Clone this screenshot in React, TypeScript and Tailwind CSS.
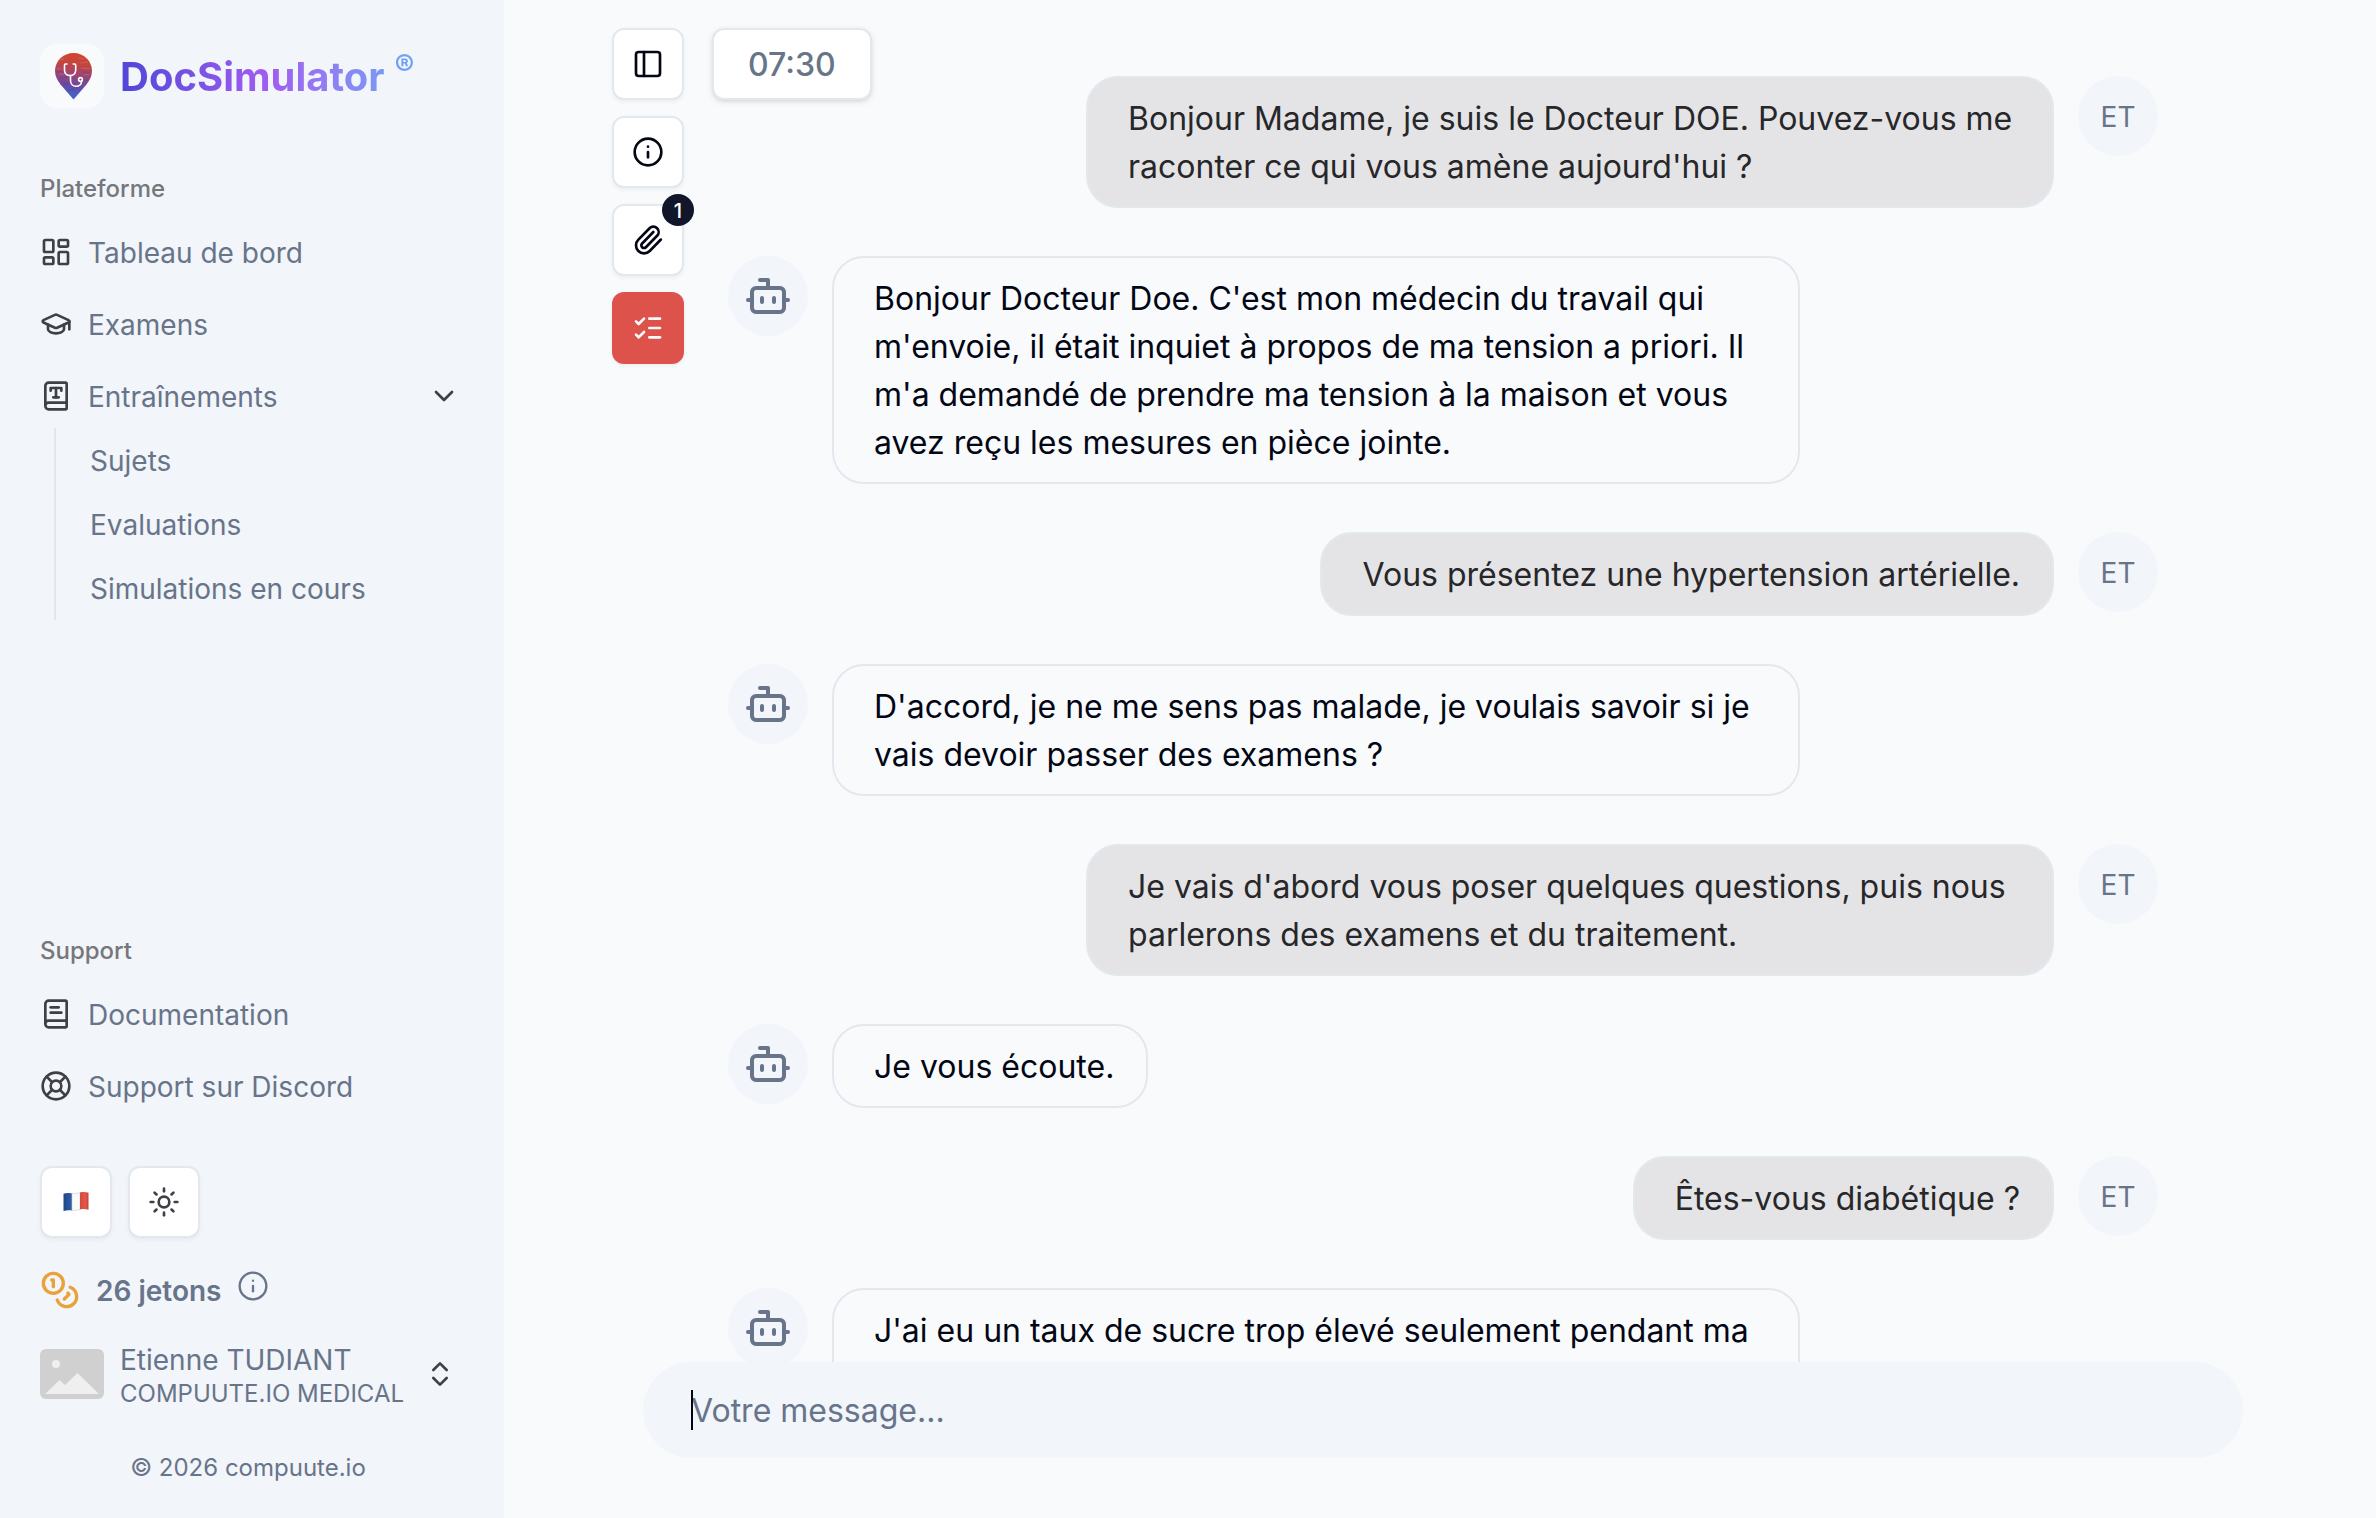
import {
  BookText,
  BookType,
  Bot,
  ChevronDown,
  ChevronsUpDown,
  GraduationCap,
  Info,
  LayoutDashboard,
  LifeBuoy,
  ListChecks,
  PanelLeft,
  Paperclip,
  Sun,
  type LucideIcon,
} from "lucide-react";
import { useState } from "react";

interface Message {
  from: "user" | "bot";
  text: string;
  // Reply still being written, the bubble keeps its full size
  pending?: boolean;
}

const MESSAGES: Message[] = [
  {
    from: "user",
    text: "Bonjour Madame, je suis le Docteur DOE. Pouvez-vous me raconter ce qui vous amène aujourd'hui ?",
  },
  {
    from: "bot",
    text: "Bonjour Docteur Doe. C'est mon médecin du travail qui m'envoie, il était inquiet à propos de ma tension a priori. Il m'a demandé de prendre ma tension à la maison et vous avez reçu les mesures en pièce jointe.",
  },
  { from: "user", text: "Vous présentez une hypertension artérielle." },
  {
    from: "bot",
    text: "D'accord, je ne me sens pas malade, je voulais savoir si je vais devoir passer des examens ?",
  },
  {
    from: "user",
    text: "Je vais d'abord vous poser quelques questions, puis nous parlerons des examens et du traitement.",
  },
  { from: "bot", text: "Je vous écoute." },
  { from: "user", text: "Êtes-vous diabétique ?" },
  { from: "bot", text: "J'ai eu un taux de sucre trop élevé seulement pendant ma", pending: true },
];

const SUB_ITEMS = ["Sujets", "Evaluations", "Simulations en cours"];

const Logo = () => (
  <svg viewBox="0 0 64 64" className="size-16" aria-hidden="true">
    <defs>
      <linearGradient id="pin" x1="0.55" y1="0" x2="0.45" y2="1">
        <stop offset="0" stopColor="#d5432f" />
        <stop offset="0.25" stopColor="#c2453f" />
        <stop offset="0.45" stopColor="#a2456e" />
        <stop offset="0.7" stopColor="#6a48a4" />
        <stop offset="1" stopColor="#2f72cf" />
      </linearGradient>
      <clipPath id="pin-shape">
        <path d="M33.5 9C23.3 9 15 16.8 15 27c0 5.200 2.300 9.200 5.500 13.500L33.500 55.500l13-15C49.700 36.200 52 32.200 52 27 52 16.800 43.700 9 33.500 9Z" />
      </clipPath>
    </defs>
    <g clipPath="url(#pin-shape)">
      <rect x="14" y="8" width="40" height="48" fill="url(#pin)" />
      <g stroke="#f3a98c" strokeOpacity="0.3" strokeWidth="0.9">
        <path d="M19 16l5-1M38 14l6 1M40 19l8-1M17 25l4-.5M41 24l9 .5M19 30l5 .5M44 31l5-.5" />
      </g>
      <g stroke="#3b3c8c" strokeOpacity="0.35" strokeWidth="1">
        <path d="M16 28l6-.5M42 28l8 .5M20 34l7-.5M44 36l4 .5M23 39l6 .5M27 46l8-.5" />
      </g>
    </g>
    <g fill="none" stroke="#fff" strokeWidth="1.6" strokeLinecap="round">
      <path d="M27 20h-1.500c-.8 0-1 .6-1 1.300V26c0 3.500 2.500 5.500 5.600 5.500s5.600-2 5.600-5.500v-4.700c0-.7-.3-1.300-1-1.300H33.200" />
      <path d="M30.500 31.500v5c0 3.500 2.500 5.800 5.500 5.800 3.500 0 5.500-2.300 5.500-4.800" />
      <circle cx="40.500" cy="35.500" r="1.900" />
    </g>
  </svg>
);

const Coins = () => (
  <svg
    viewBox="0 0 24 24"
    className="size-10 text-[#e9a23b]"
    fill="none"
    stroke="currentColor"
    strokeWidth="2"
    strokeLinecap="round"
    strokeLinejoin="round"
    aria-hidden="true"
  >
    <circle cx="8" cy="8" r="6" />
    <path d="M18.090 10.370A6 6 0 1 1 10.340 18" />
    <path d="M7 6h1v4" />
    <path d="m16.710 13.880.7.710-2.820 2.820" />
  </svg>
);

const FrenchFlag = () => (
  <svg viewBox="0 0 26 20" className="h-5 w-6.5" aria-hidden="true">
    <defs>
      <linearGradient id="flag-blue" x1="0" x2="1">
        <stop offset="0" stopColor="#1f4585" />
        <stop offset="1" stopColor="#3060ab" />
      </linearGradient>
      <linearGradient id="flag-red" x1="0" x2="1">
        <stop offset="0" stopColor="#d5483f" />
        <stop offset="0.6" stopColor="#e25a4b" />
        <stop offset="1" stopColor="#c94238" />
      </linearGradient>
    </defs>
    <path d="M.5 1.800C3 .8 6 1 9 1.400V18.400c-3-.4-6-.3-8.500.6Z" fill="url(#flag-blue)" />
    <path
      d="M9 1.400c3 .3 5.500 0 8-.8v16.800c-2.500 1-5 1.300-8 1Z"
      fill="#fafafa"
      stroke="#c9ccd1"
      strokeWidth="0.600"
    />
    <path d="M17 .6c3-.8 6-.6 8.500.2v17c-2.500-.8-5.500-1.200-8.500-.4Z" fill="url(#flag-red)" />
  </svg>
);

const ImagePlaceholder = () => (
  <svg viewBox="0 0 64 50" className="h-[50px] w-16 rounded-md" aria-hidden="true">
    <rect width="64" height="50" fill="#d0d0d0" />
    <circle cx="16" cy="15" r="4" fill="#efefef" />
    <path d="M5 45 19.500 31l5.500 5 12.500-12L59 45Z" fill="#efefef" />
  </svg>
);

const NavItem = ({ icon: Icon, label }: { icon: LucideIcon; label: string }) => (
  <a href="#" className="flex h-16 items-center gap-4 pl-4">
    <Icon className="size-8 text-[#3f4046]" />
    <span className="pt-0.5">{label}</span>
  </a>
);

const NavHeading = ({ label }: { label: string }) => (
  <h2 className="flex h-16 items-center pt-0.5 pl-4 text-2xl font-medium text-[#76777b]">{label}</h2>
);

const Sidebar = () => (
  <aside className="flex w-[504px] shrink-0 flex-col bg-[#f2f5fa] pr-2 text-[28px] leading-10 text-[#677489]">
    <div className="flex items-center gap-4 px-10 pt-11">
      <div className="size-16 rounded-2xl bg-[#f9fafc]">
        <Logo />
      </div>
      <div className="flex items-start bg-linear-to-r from-[#4f46d8] via-[#a05cf0] to-[#6aa5f6] bg-clip-text text-transparent">
        <span className="pt-0.5 text-[40px] leading-[60px] font-bold">DocSimulator</span>
        <span className="pl-2.5 text-3xl leading-10 font-bold">®</span>
      </div>
    </div>

    <nav className="mt-12 px-6">
      <NavHeading label="Plateforme" />
      <div className="flex flex-col gap-2">
        <NavItem icon={LayoutDashboard} label="Tableau de bord" />
        <NavItem icon={GraduationCap} label="Examens" />
        <button type="button" className="flex h-16 items-center gap-4 pr-3 pl-4 text-left">
          <BookType className="size-8 text-[#3f4046]" />
          <span className="flex-1 pt-0.5">Entraînements</span>
          <ChevronDown className="size-8 text-[#3f4046]" />
        </button>
      </div>
      <ul className="ml-[30px] border-l-2 border-[#e4e6eb] pl-[34px]">
        {SUB_ITEMS.map((item) => (
          <li key={item}>
            <a href="#" className="flex h-16 items-center pt-0.5">
              {item}
            </a>
          </li>
        ))}
      </ul>
    </nav>

    <nav className="mt-auto px-6">
      <NavHeading label="Support" />
      <div className="flex flex-col gap-2">
        <NavItem icon={BookText} label="Documentation" />
        <NavItem icon={LifeBuoy} label="Support sur Discord" />
      </div>
    </nav>

    <div className="mt-12 flex gap-4 px-10">
      <button
        type="button"
        aria-label="Langue"
        className="flex size-18 items-center justify-center rounded-xl border-2 border-[#e3e8ef] bg-white shadow-[0_2px_4px_rgba(0,0,0,0.05)]"
      >
        <FrenchFlag />
      </button>
      <button
        type="button"
        aria-label="Thème"
        className="flex size-18 items-center justify-center rounded-xl border-2 border-[#e3e8ef] bg-white shadow-[0_2px_4px_rgba(0,0,0,0.05)]"
      >
        <Sun className="size-8 text-[#3f4046]" />
      </button>
    </div>

    <div className="mt-8 flex items-center px-10">
      <Coins />
      <span className="pt-0.5 pl-4 leading-9 font-semibold">26 jetons</span>
      <Info className="mb-2 ml-4 size-8" strokeWidth={1.75} />
    </div>

    <button type="button" className="mt-7 flex items-center gap-4 px-10 text-left">
      <ImagePlaceholder />
      <span className="flex flex-1 flex-col pt-1">
        <span className="leading-9">Etienne TUDIANT</span>
        <span className="text-2xl leading-8">COMPUUTE.IO MEDICAL</span>
      </span>
      <ChevronsUpDown className="size-8 text-[#3f4046]" />
    </button>

    <footer className="mt-10 pb-8 text-center text-2xl leading-9">© 2026 compuute.io</footer>
  </aside>
);

const ToolButton = ({ icon: Icon, label }: { icon: LucideIcon; label: string }) => (
  <button
    type="button"
    aria-label={label}
    className="flex size-18 items-center justify-center rounded-xl border-2 border-[#e3e8ef] bg-white shadow-[0_2px_4px_rgba(0,0,0,0.05)]"
  >
    <Icon className="size-8 text-[#030715]" />
  </button>
);

const Toolbar = () => (
  <div className="absolute top-7 left-[108px] z-10 flex items-start gap-7">
    <div className="flex flex-col gap-4">
      <ToolButton icon={PanelLeft} label="Panneau" />
      <ToolButton icon={Info} label="Informations" />
      <div className="relative">
        <ToolButton icon={Paperclip} label="Pièces jointes" />
        <span className="absolute -top-2.5 -right-2.5 flex size-8 items-center justify-center rounded-full bg-[#11162a] pt-0.5 text-xl font-medium text-white">
          1
        </span>
      </div>
      <button
        type="button"
        aria-label="Terminer"
        className="flex size-18 items-center justify-center rounded-xl bg-[#de524c] shadow-[0_2px_4px_rgba(0,0,0,0.05)]"
      >
        <ListChecks className="size-8 text-[#f9fafc]" />
      </button>
    </div>
    <div className="flex h-18 items-center rounded-xl border-2 border-[#e3e8ef] bg-white px-[34px] pt-0.5 font-medium text-[#677489] shadow-[0_2px_6px_rgba(0,0,0,0.1),0_2px_4px_-2px_rgba(0,0,0,0.1)]">
      07:30
    </div>
  </div>
);

const ChatMessage = ({ from, text, pending }: Message) => {
  if (from === "user") {
    return (
      <li className="flex items-start justify-end gap-6">
        <p className="max-w-[968px] rounded-[32px] border-2 border-[#e3e8ef] bg-[#e4e4e6] pt-[17px] pr-8 pb-[15px] pl-10 text-[#27272a]">
          {text}
        </p>
        <div className="flex size-20 shrink-0 items-center justify-center rounded-full bg-[#f2f5fa] pt-0.5 text-[28px] text-[#677489]">
          ET
        </div>
      </li>
    );
  }

  return (
    <li className="flex items-start gap-6">
      <div className="flex size-20 shrink-0 items-center justify-center rounded-full bg-[#f2f5fa] text-[#677489]">
        <Bot className="size-12" />
      </div>
      <p
        className={`max-w-[968px] rounded-[32px] border-2 border-[#e3e8ef] pt-[17px] pr-8 pb-[15px] pl-10 text-[#030715] ${
          pending ? "min-h-[132px] w-full" : ""
        }`}
      >
        {text}
      </p>
    </li>
  );
};

export default function App() {
  const [draft, setDraft] = useState("");

  return (
    <div className="flex h-screen overflow-hidden bg-[#f9fafc] font-['Inter',sans-serif]">
      <Sidebar />
      <main className="relative flex min-w-0 flex-1 flex-col pb-15 pl-1.5 text-[32px] leading-[48px]">
        <Toolbar />
        <ul className="mx-auto flex min-h-0 w-full max-w-[1600px] flex-1 flex-col gap-12 overflow-hidden px-[85px] pt-[76px]">
          {MESSAGES.map((message) => (
            <ChatMessage key={message.text} {...message} />
          ))}
        </ul>
        <form className="relative mx-auto w-full max-w-[1600px] shrink-0">
          <input
            type="text"
            aria-label="Votre message"
            placeholder="Votre message..."
            value={draft}
            onChange={(e) => setDraft(e.target.value)}
            className="h-24 w-full rounded-full bg-[#f2f5fa] px-12 text-[#030715] outline-none placeholder:text-[#677489]"
          />
          {/* Text cursor */}
          <span className="absolute top-7 left-12 h-10 w-0.5 bg-[#030715]" />
        </form>
      </main>
    </div>
  );
}
